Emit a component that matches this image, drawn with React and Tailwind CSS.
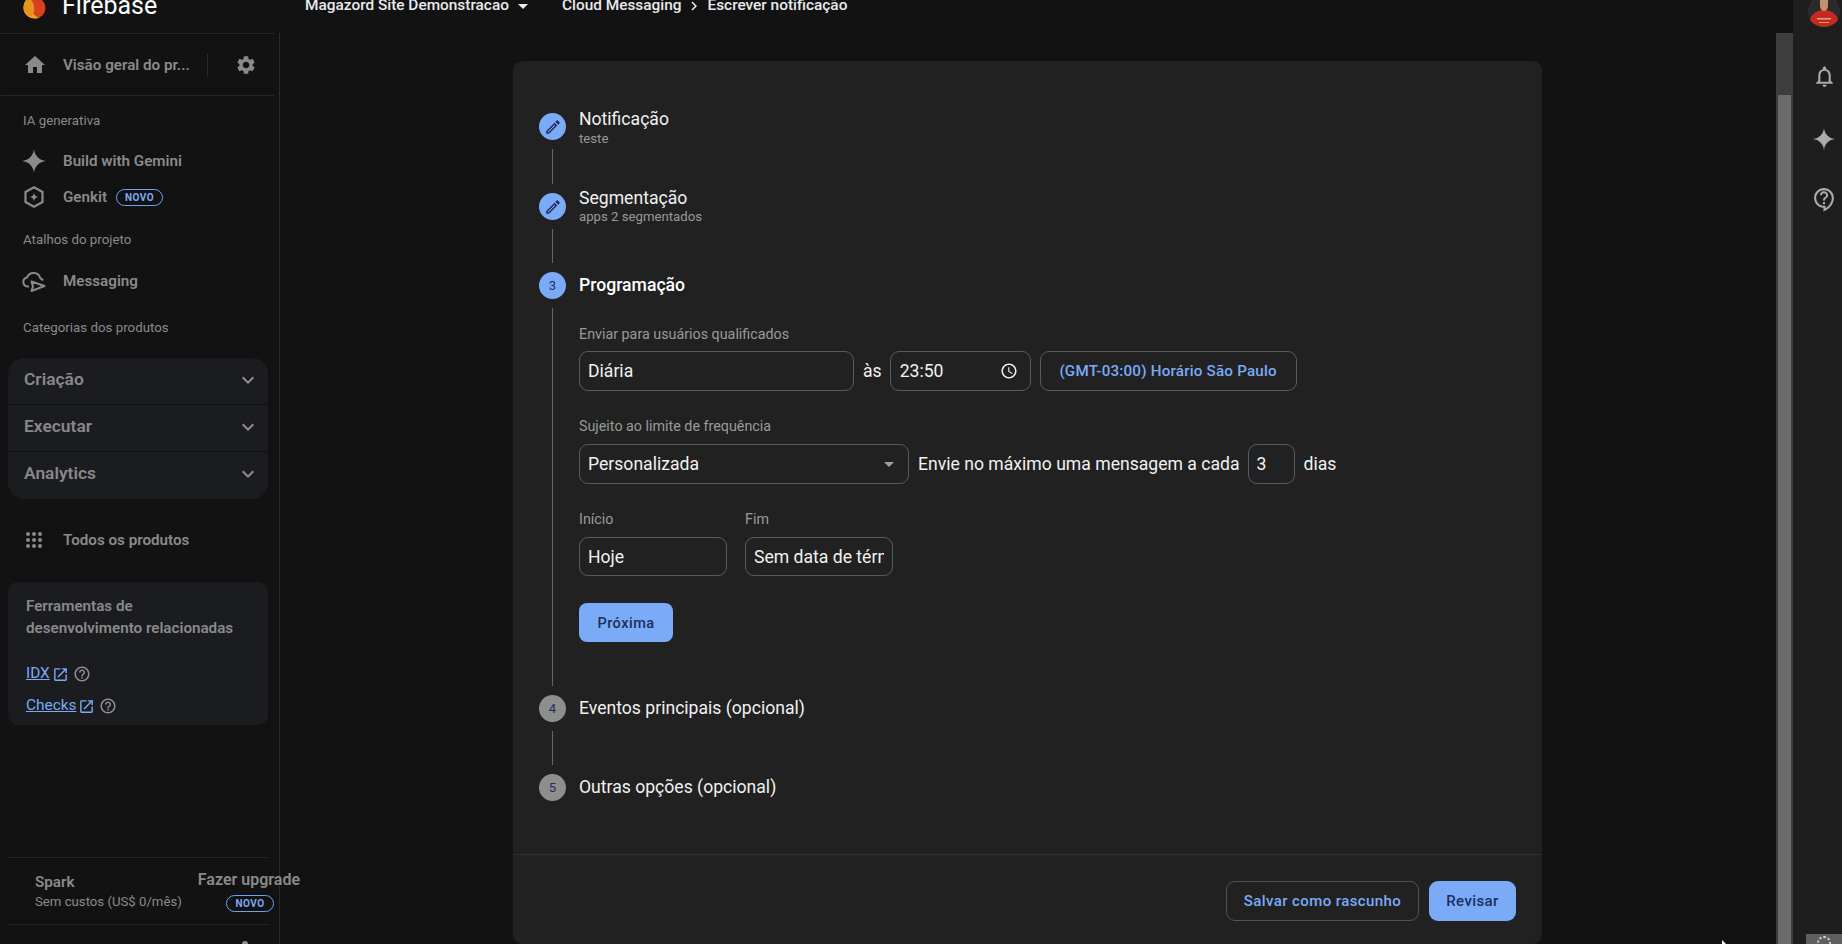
import React from "react";
import { MdHome, MdSettings, MdExpandMore, MdOpenInNew, MdHelpOutline, MdOutlineEdit, MdOutlineAccessTime, MdOutlineNotifications, MdOutlineContactSupport, MdChevronRight } from "react-icons/md";

const Star = ({ size = 24, className = "" }) => (
  <svg width={size} height={size} viewBox="0 0 24 24" className={className} fill="currentColor">
    <path d="M12 0C12.6 6.6 17.4 11.4 24 12 17.4 12.6 12.6 17.4 12 24 11.4 17.4 6.6 12.6 0 12 6.6 11.4 11.4 6.6 12 0Z" />
  </svg>
);

const Genkit = () => (
  <svg width="24" height="24" viewBox="0 0 24 24" fill="none" stroke="currentColor" strokeWidth="2.2">
    <path d="M12 2.2 20.5 7v10L12 21.8 3.5 17V7Z" />
    <path d="M12 7.5c.3 2.7 1.8 4.2 4.5 4.5-2.7.3-4.2 1.8-4.5 4.5-.3-2.7-1.8-4.2-4.5-4.5 2.7-.3 4.2-1.8 4.5-4.5Z" fill="currentColor" stroke="none" />
  </svg>
);

const MessagingIcon = () => (
  <svg width="24" height="24" viewBox="0 0 24 24" fill="none" stroke="currentColor" strokeWidth="2" strokeLinejoin="round">
    <path d="M7 17.5H5.5A4.5 4.5 0 0 1 5 8.6 7 7 0 0 1 18.3 9.2 4.5 4.5 0 0 1 21 11.5" />
    <path d="M9.5 12.5 22.5 17 9.5 22l1.5-4.6Z" />
  </svg>
);

const Grid = () => (
  <svg width="16" height="16" viewBox="0 0 16 16" fill="currentColor">
    {[2, 8, 14].map((y) => [2, 8, 14].map((x) => <circle key={x + "-" + y} cx={x} cy={y} r="2" />))}
  </svg>
);

const Logo = () => (
  <svg width="23" height="20" viewBox="0 0 23 20" className="mt-[6px] shrink-0">
    <circle cx="12" cy="9" r="10.5" fill="#d8401f" />
    <path d="M6 -2C2 1 .5 5 .5 9c0 6 5 10.5 11.5 10.5 2 0 3-.5 4-1C10 17 6 10 6 -2Z" fill="#eea320" />
    <path d="M6 -2C10 2 12 7 11 12c-.5 3-2.5 5.5-4.5 6C3 16 .5 13 .5 9 .5 5 2 1 6 -2Z" fill="#e8941c" />
  </svg>
);

const Avatar = () => (
  <svg width="32" height="28" viewBox="0 0 32 28">
    <circle cx="16" cy="11" r="16" fill="#2b2a2c" />
    <path d="M2 20c1-6 7-10 14-10s13 4 14 10c-3 4-8 7-14 7S5 24 2 20Z" fill="#c42a1f" />
    <path d="M12 0h8v6c0 3-2 5-4 5s-4-2-4-5Z" fill="#c4906c" />
    <path d="M9 18h14v1.5H9Z" fill="#e3a585" />
    <path d="M11 22h10v1H11Z" fill="#e2b13c" />
  </svg>
);

const Badge = ({ className = "" }) => (
  <span className={"flex h-[17px] w-[47px] items-center justify-center rounded-full border border-[#6ea2f5] text-[10px] font-bold tracking-[0.5px] text-[#7baaf7] " + className}>
    NOVO
  </span>
);

const Row = ({ icon, children }) => (
  <div className="flex h-[36px] items-center text-[15.2px] font-semibold text-[#8a8a8a]">
    <span className="flex w-[63px] justify-center pl-[5px]">{icon}</span>
    {children}
  </div>
);

const Heading = ({ children, className = "" }) => (
  <div className={"flex h-[24px] items-center pl-[23px] pt-[1px] text-[13.3px] font-normal text-[#8a8a8a] " + className}>{children}</div>
);

const GroupRow = ({ label, last }) => (
  <div className={"flex h-[47px] items-center justify-between pl-[16px] pr-[8px] text-[17.4px] font-semibold text-[#888888] " + (last ? "pb-[4px]" : "border-b border-[#0f0f10] pb-[3px]")}>
    {label}
    <MdExpandMore size={24} className="text-[#8e8e8e]" />
  </div>
);

const Sidebar = () => (
  <aside className="flex w-[280px] shrink-0 flex-col">
    <div className="h-[33px] shrink-0">
      <div className="flex h-[12px] items-center pl-[23px]">
        <Logo />
        <span className="ml-[16px] text-[25px] font-normal text-white">Firebase</span>
      </div>
    </div>
    <div className="flex min-h-0 flex-1 flex-col border-r border-[#2a2a2a]">
      <div className="ml-px mr-[5px] flex h-[63px] shrink-0 items-center border-y border-[#262626] text-[15.2px] font-semibold text-[#8a8a8a]">
        <span className="flex w-[62px] justify-center pl-[5px]"><MdHome size={24} /></span>
        <span className="pt-[1px]">Visão geral do pr...</span>
        <span className="ml-[17px] h-[22px] w-px bg-[#2a2a2a]" />
        <MdSettings size={22} className="ml-[27px]" />
      </div>
      <Heading className="mt-[12px]">IA generativa</Heading>
      <div className="mt-[11px]">
        <Row icon={<Star size={24} />}><span className="pt-[1px]">Build with Gemini</span></Row>
        <Row icon={<Genkit />}>Genkit<Badge className="ml-[9px]" /></Row>
      </div>
      <Heading className="mt-[12px]">Atalhos do projeto</Heading>
      <div className="mt-[12px]"><Row icon={<MessagingIcon />}>Messaging</Row></div>
      <Heading className="mt-[16px]">Categorias dos produtos</Heading>
      <div className="ml-[8px] mr-[11px] mt-[19px] overflow-hidden rounded-[16px] bg-[#1b1c1f]">
        <GroupRow label="Criação" />
        <GroupRow label="Executar" />
        <GroupRow label="Analytics" last />
      </div>
      <div className="mt-[23px]"><Row icon={<Grid />}>Todos os produtos</Row></div>
      <div className="ml-[8px] mr-[11px] mt-[24px] h-[143px] rounded-[10px] bg-[#1b1c1f] pl-[18px] pt-[13px]">
        <div className="text-[15.2px] font-semibold leading-[22px] text-[#8a8a8a]">
          Ferramentas de<br />desenvolvimento relacionadas
        </div>
        <div className="mt-[25px] flex h-[20px] items-center text-[15.4px] text-[#7baaf7]">
          <span className="underline">IDX</span>
          <MdOpenInNew size={17} className="ml-[2px]" />
          <MdHelpOutline size={18} className="ml-[4px] text-[#8e8e8e]" />
        </div>
        <div className="mt-[12px] flex h-[20px] items-center text-[15.4px] text-[#7baaf7]">
          <span className="underline">Checks</span>
          <MdOpenInNew size={17} className="ml-[2px]" />
          <MdHelpOutline size={18} className="ml-[4px] text-[#8e8e8e]" />
        </div>
      </div>
      <div className="mx-[8px] mr-[11px] mt-auto flex h-[68px] shrink-0 justify-between border-y border-[#262626] pl-[27px] text-[#8a8a8a]">
        <div className="pt-[14px]">
          <div className="text-[15.2px] font-semibold leading-[20px]">Spark</div>
          <div className="text-[13.2px] leading-[20px]">Sem custos (US$ 0/mês)</div>
        </div>
        <div className="flex w-0 flex-col items-end overflow-visible pt-[12px]">
          <div className="mr-[-32px] whitespace-nowrap text-[16px] font-semibold leading-[20px]">Fazer upgrade</div>
          <Badge className="mr-[-6px] mt-[5px] w-[48px] shrink-0" />
        </div>
      </div>
      <div className="flex h-[19px] shrink-0 items-end justify-end pr-[31px]">
        <span className="h-[3px] w-[6px] rounded-t-full bg-[#8e8e8e]" />
      </div>
    </div>
  </aside>
);

const Circle = ({ active, children }) => (
  <span className={"flex h-[27px] w-[27px] shrink-0 items-center justify-center rounded-full text-[13px] text-[#1c2f5c] " + (active ? "bg-[#7baaf7]" : "bg-[#8e8e8e]")}>
    {children}
  </span>
);

const Step = ({ circle, active, height, line = true, children }) => (
  <div className={"flex gap-[13px] " + height}>
    <div className="flex w-[27px] shrink-0 flex-col items-center pt-[5px]">
      <Circle active={active}>{circle}</Circle>
      {line && <span className="mb-[4px] mt-[9px] w-px flex-1 bg-[#63666a]" />}
    </div>
    <div className="min-w-0 flex-1">{children}</div>
  </div>
);

const Done = ({ title, sub, tight }) => (
  <>
    <div className={"text-[17.6px] text-[#f1f1f1] " + (tight ? "leading-[20px]" : "leading-[22px]")}>{title}</div>
    <div className="mt-px text-[13.2px] leading-[16px] text-[#9a9a9a]">{sub}</div>
  </>
);

const Simple = ({ title }) => (
  <div className="mt-[5px] text-[17.6px] leading-[26px] text-[#f1f1f1]">{title}</div>
);

const Field = ({ className = "", children }) => (
  <div className={"flex items-center rounded-[9px] border border-[#585a5d] text-[17.6px] text-[#f1f1f1] " + className}>{children}</div>
);

const Label = ({ children, className = "" }) => (
  <div className={"h-[20px] text-[14.3px] leading-[20px] text-[#9a9a9a] " + className}>{children}</div>
);

const Card = () => (
  <div className="flex h-[883px] w-[1029px] flex-col overflow-hidden rounded-[9px] bg-[#212121]">
    <div className="h-[793px] shrink-0 pl-[26px] pt-[47px]">
      <Step circle={<MdOutlineEdit size={18} />} active height="h-[80px]">
        <Done title="Notificação" sub="teste" />
      </Step>
      <Step circle={<MdOutlineEdit size={18} />} active height="h-[79px]">
        <Done tight title="Segmentação" sub="apps 2 segmentados" />
      </Step>
      <Step circle="3" active height="h-[423px]">
        <div className="mt-[5px] text-[17.6px] font-medium leading-[26px] text-white">Programação</div>
        <Label className="mt-[26px]">Enviar para usuários qualificados</Label>
        <div className="mt-[7px] flex h-[40px] items-center">
          <Field className="h-full w-[275px] pl-[8px]">Diária</Field>
          <span className="ml-[9px] text-[17.6px] text-[#f1f1f1]">às</span>
          <Field className="ml-[8px] h-full w-[141px] justify-between pl-[9px] pr-[12px]">
            23:50
            <MdOutlineAccessTime size={18} />
          </Field>
          <Field className="ml-[9px] h-full w-[257px] justify-center">
            <span className="text-[15.2px] font-medium tracking-[0.2px] text-[#7baaf7]">(GMT-03:00) Horário São Paulo</span>
          </Field>
        </div>
        <Label className="mt-[25px]">Sujeito ao limite de frequência</Label>
        <div className="mt-[8px] flex h-[40px] items-center">
          <Field className="h-full w-[330px] justify-between pl-[8px] pr-[14px]">
            Personalizada
            <span className="h-0 w-0 border-x-[5px] border-t-[5px] border-x-transparent border-t-[#a0a0a0]" />
          </Field>
          <span className="ml-[9px] whitespace-nowrap text-[17.6px] text-[#f1f1f1]">Envie no máximo uma mensagem a cada</span>
          <Field className="ml-[8px] h-full w-[47px] pl-[8px]">3</Field>
          <span className="ml-[9px] text-[17.6px] text-[#f1f1f1]">dias</span>
        </div>
        <div className="mt-[25px] flex gap-[18px]">
          <div className="w-[148px]">
            <Label>Início</Label>
            <Field className="mt-[8px] h-[39px] pl-[8px] pt-[2px]">Hoje</Field>
          </div>
          <div className="w-[148px]">
            <Label>Fim</Label>
            <Field className="mt-[8px] h-[39px] px-[8px] pt-[2px]">
              <span className="block overflow-hidden whitespace-nowrap">Sem data de término</span>
            </Field>
          </div>
        </div>
        <button className="mt-[27px] h-[39px] w-[94px] rounded-[8px] bg-[#7baaf7] pt-[2px] text-[14.5px] font-medium tracking-[0.5px] text-[#1c2f5c]">Próxima</button>
      </Step>
      <Step circle="4" height="h-[79px]"><Simple title="Eventos principais (opcional)" /></Step>
      <Step circle="5" line={false} height="h-[40px]"><Simple title="Outras opções (opcional)" /></Step>
    </div>
    <div className="flex flex-1 justify-end gap-[10px] border-t border-[#303030] pr-[26px] pt-[26px]">
      <button className="h-[40px] w-[193px] rounded-[9px] border border-[#505255] text-[15px] font-medium tracking-[0.4px] text-[#7baaf7]">Salvar como rascunho</button>
      <button className="h-[40px] w-[87px] rounded-[9px] bg-[#7baaf7] text-[15px] font-medium tracking-[0.4px] text-[#1c2f5c]">Revisar</button>
    </div>
  </div>
);

const Main = () => (
  <main className="flex min-w-0 flex-1 flex-col">
    <div className="h-[33px] shrink-0">
      <div className="flex h-[12px] items-center whitespace-nowrap pl-[25px] text-[15.4px] font-medium text-[#e8eaed]">
        Magazord Site Demonstracao
        <span className="ml-[9px] h-0 w-0 border-x-[5.5px] border-t-[5.5px] border-x-transparent border-t-[#e8eaed]" />
        <span className="ml-[34px]">Cloud Messaging</span>
        <MdChevronRight size={18} className="mx-[4px]" />
        <span>Escrever notificação</span>
      </div>
    </div>
    <div className="flex min-h-0 flex-1">
      <div className="min-w-0 flex-1 overflow-hidden pl-[233px] pt-[28px]">
        <Card />
      </div>
      <div className="flex w-[17px] shrink-0 flex-col bg-[#3d3d3d] px-[2px] pt-[62px]">
        <div className="flex-1 bg-[#6b6b6b]" />
      </div>
    </div>
  </main>
);

const Rail = () => (
  <div className="flex w-[49px] shrink-0 flex-col items-center bg-[#1e1e1e] pl-[13px] text-[#a8acb0]">
    <div className="h-[28px]"><Avatar /></div>
    <MdOutlineNotifications size={25} className="mt-[36px]" />
    <Star size={22} className="mt-[39px]" />
    <MdOutlineContactSupport size={25} className="mt-[37px]" />
    <div className="ml-auto mt-auto flex h-[10px] w-[36px] shrink-0 items-start justify-center overflow-hidden bg-[#5f5f5f]">
      <span className="mt-[2px] h-[14px] w-[14px] rounded-full border-2 border-dotted border-[#d5d5d5]" />
    </div>
  </div>
);

export default function App() {
  return (
    <div className="relative flex h-[944px] w-[1842px] overflow-hidden bg-[#121212] font-['Roboto',sans-serif]">
      <Sidebar />
      <Main />
      <Rail />
      <svg width="8" height="12" viewBox="0 0 8 12" className="absolute left-[1722px] top-[940px]">
        <path d="M0 0 7 7 3 7 0 11Z" fill="#ffffff" />
      </svg>
    </div>
  );
}
